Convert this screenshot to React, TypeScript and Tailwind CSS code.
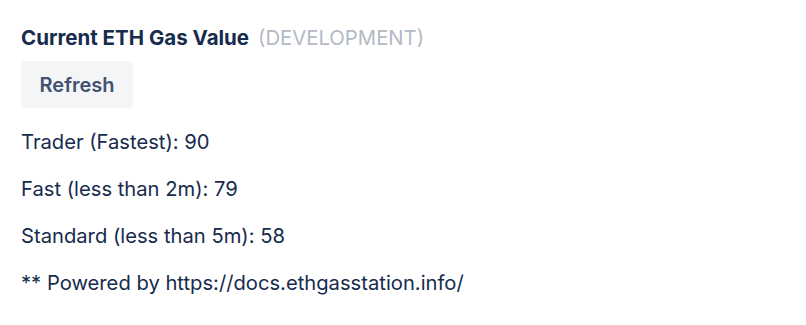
export default function App() {
  const rows = [
    "Trader (Fastest): 90",
    "Fast (less than 2m): 79",
    "Standard (less than 5m): 58",
    "** Powered by https://docs.ethgasstation.info/",
  ]
  return (
    <div className="w-[806px] h-[325px] bg-white px-[21px] pt-[25px] text-[#172B4D]" style={{ fontFamily: "Inter, 'Noto Sans', sans-serif" }}>
      <div className="flex items-baseline gap-[9px] h-[26px] leading-[26px]">
        <span className="text-[20.5px] font-bold">Current ETH Gas Value</span>
        <span className="text-[20.3px] text-[#B3BAC5]">(DEVELOPMENT)</span>
      </div>
      <button className="mt-[10px] h-[47px] w-[112px] rounded-[4px] bg-[#F4F5F7] text-[20px] font-semibold text-[#42526E]">
        Refresh
      </button>
      <div className="mt-[10px] flex flex-col">
        {rows.map((r) => (
          <p key={r} className="h-[47px] leading-[47px] text-[20.2px]">{r}</p>
        ))}
      </div>
    </div>
  )
}
